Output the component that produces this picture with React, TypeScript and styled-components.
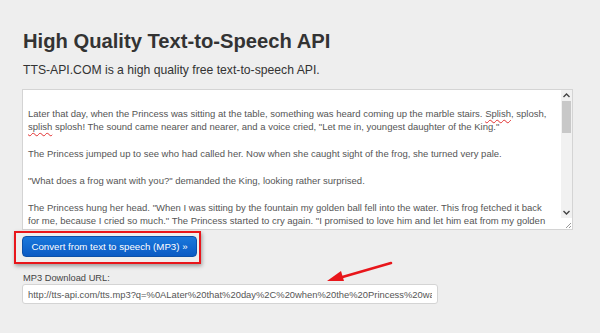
import React from 'react';
import styled, { createGlobalStyle } from 'styled-components';

const GlobalStyle = createGlobalStyle`
  html, body {
    margin: 0;
    padding: 0;
    background: #eeeeee;
    font-family: 'Liberation Sans', Arial, sans-serif;
  }
`;

const story = [
  [
    'Later that day, when the Princess was sitting at the table, something was heard coming up the marble stairs. ',
    { bad: 'Splish' },
    ', splosh, ',
    { bad: 'splish' },
    ' splosh! The sound came nearer and nearer, and a voice cried, "Let me in, youngest daughter of the King."'
  ],
  ['The Princess jumped up to see who had called her. Now when she caught sight of the frog, she turned very pale.'],
  ['"What does a frog want with you?" demanded the King, looking rather surprised.'],
  [
    'The Princess hung her head. "When I was sitting by the fountain my golden ball fell into the water. This frog fetched it back for me, because I cried so much." The Princess started to cry again. "I promised to love him and let him eat from my golden plate and sleep in my little bed."'
  ]
];

const url =
  'http://tts-api.com/tts.mp3?q=%0ALater%20that%20day%2C%20when%20the%20Princess%20was%20sitting%20at%20the%20table';

const App = () => {
  return (
    <>
      <GlobalStyle />
      <Page>
        <Title>High Quality Text-to-Speech API</Title>
        <Lead>TTS-API.COM is a high quality free text-to-speech API.</Lead>
        <TextBox>
          <TextContent>
            {story.map((p, i) => (
              <Para key={i}>
                {p.map((part: any, j) =>
                  typeof part === 'string' ? part : <Misspelled key={j}>{part.bad}</Misspelled>
                )}
              </Para>
            ))}
          </TextContent>
          <ScrollBar>
            <ScrollArrow>
              <svg width='7' height='5' viewBox='0 0 7 5'>
                <path d='M0.5 4 L3.5 1 L6.5 4' fill='none' stroke='#444' strokeWidth='1.4' />
              </svg>
            </ScrollArrow>
            <ScrollTrack>
              <ScrollThumb />
            </ScrollTrack>
            <ScrollArrow>
              <svg width='7' height='5' viewBox='0 0 7 5'>
                <path d='M0.5 1 L3.5 4 L6.5 1' fill='none' stroke='#444' strokeWidth='1.4' />
              </svg>
            </ScrollArrow>
            <Grip>
              <svg width='8' height='8' viewBox='0 0 8 8'>
                <path d='M7 2 L2 7 M7 5 L5 7' stroke='#999' strokeWidth='1' />
              </svg>
            </Grip>
          </ScrollBar>
        </TextBox>
        <ButtonRow>
          <ConvertButton>Convert from text to speech (MP3) »</ConvertButton>
          <Highlight />
        </ButtonRow>
        <Label>MP3 Download URL:</Label>
        <UrlRow>
          <UrlInput readOnly value={url} />
          <Arrow width='70' height='26' viewBox='0 0 70 26'>
            <path d='M66 3 L14 18' stroke='#e8161b' strokeWidth='2.6' strokeLinecap='round' />
            <path d='M2 21 L16 11 L19 21 Z' fill='#e8161b' />
          </Arrow>
        </UrlRow>
      </Page>
    </>
  );
};

const Page = styled.div`
  width: 600px;
  height: 333px;
  box-sizing: border-box;
  padding: 30px 0 0 22px;
  overflow: hidden;
`;

const Title = styled.h1`
  margin: 0 0 0 1px;
  font-size: 20.2px;
  line-height: 23px;
  font-weight: bold;
  color: #333333;
`;

const Lead = styled.p`
  margin: 10px 0 11px 1px;
  font-size: 12.2px;
  line-height: 15px;
  color: #333333;
`;

const TextBox = styled.div`
  display: flex;
  width: 551px;
  height: 141px;
  box-sizing: border-box;
  border: 1px solid #d4d4d4;
  background: #ffffff;
`;

const TextContent = styled.div`
  flex: 1;
  overflow: hidden;
  padding: 17px 8px 0 5px;
  font-size: 9.5px;
  line-height: 13.4px;
  color: #555555;
`;

const Para = styled.p`
  margin: 0;
  padding-bottom: 13.4px;
`;

const Misspelled = styled.span`
  text-decoration: underline wavy #e23030;
  text-decoration-thickness: 1px;
  text-underline-offset: 2px;
`;

const ScrollBar = styled.div`
  display: flex;
  flex-direction: column;
  width: 11px;
  background: #f1f1f1;
`;

const ScrollArrow = styled.div`
  height: 11px;
  display: flex;
  align-items: center;
  justify-content: center;
`;

const ScrollTrack = styled.div`
  flex: 1;
  padding: 0 1px;
`;

const ScrollThumb = styled.div`
  height: 32px;
  background: #c8c8c8;
`;

const Grip = styled.div`
  height: 11px;
  background: #ffffff;
  display: flex;
  align-items: flex-end;
  justify-content: flex-end;
`;

const ButtonRow = styled.div`
  position: relative;
  margin-top: 6px;
  display: flex;
`;

const ConvertButton = styled.button`
  width: 175px;
  height: 21px;
  padding: 0;
  border: 1px solid #0b50a8;
  border-radius: 4px;
  background: linear-gradient(#1a78dc, #0a5ac4);
  color: #ffffff;
  font-family: 'Liberation Sans', Arial, sans-serif;
  font-size: 9.7px;
  cursor: pointer;
`;

const Highlight = styled.div`
  position: absolute;
  left: -8px;
  top: -5px;
  width: 187px;
  height: 33px;
  box-sizing: border-box;
  border: 2px solid #e8161b;
  box-shadow: 1px 2px 4px rgba(0, 0, 0, 0.35);
  pointer-events: none;
`;

const Label = styled.div`
  margin: 15px 0 0 1px;
  font-size: 9.3px;
  line-height: 12px;
  color: #444444;
`;

const UrlRow = styled.div`
  position: relative;
`;

const UrlInput = styled.input`
  display: block;
  width: 416px;
  height: 20px;
  box-sizing: border-box;
  padding: 0 5px;
  border: 1px solid #d4d4d4;
  border-radius: 3px;
  background: #ffffff;
  color: #555555;
  font-family: 'Liberation Sans', Arial, sans-serif;
  font-size: 9.4px;
  outline: none;
`;

const Arrow = styled.svg`
  position: absolute;
  left: 303px;
  top: -24px;
`;

export default App;
